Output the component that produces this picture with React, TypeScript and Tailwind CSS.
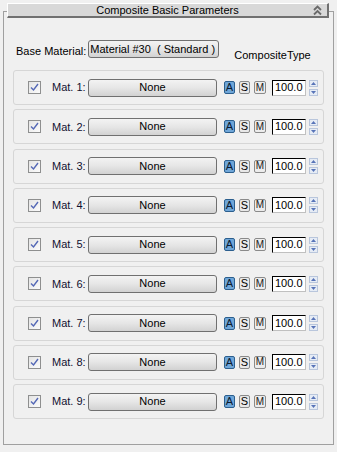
const mats = [1, 2, 3, 4, 5, 6, 7, 8, 9]

function CheckBox() {
  return (
    <div className="w-[13px] h-[13px] border border-[#8e8f8f] bg-gradient-to-br from-[#e4e4e4] to-[#fbfbfb] flex items-center justify-center">
      <svg width="9" height="9" viewBox="0 0 9 9">
        <path d="M1 4.5 L3.5 7 L8 1" fill="none" stroke="#5468b6" strokeWidth="1.4" />
      </svg>
    </div>
  )
}

function Spinner() {
  return (
    <div className="w-[9px] h-[16px] flex flex-col justify-between ml-[3px]">
      <div className="h-[7px] bg-[#e6ecf5] border border-[#b9c6dc] flex items-center justify-center">
        <svg width="5" height="3" viewBox="0 0 5 3">
          <path d="M0 3 L2.5 0 L5 3 Z" fill="#5874b8" />
        </svg>
      </div>
      <div className="h-[7px] bg-[#e6ecf5] border border-[#b9c6dc] flex items-center justify-center">
        <svg width="5" height="3" viewBox="0 0 5 3">
          <path d="M0 0 L2.5 3 L5 0 Z" fill="#5874b8" />
        </svg>
      </div>
    </div>
  )
}

function MatRow({ n }: { n: number }) {
  return (
    <div className="h-[35px] mx-[9px] border border-[#d6d6d6] rounded-[3px] flex items-center">
      <div className="ml-[14px]">
        <CheckBox />
      </div>
      <span className="ml-[11px] w-[36px] text-[#101030]">Mat. {n}:</span>
      <button className="w-[129px] h-[18px] border border-[#707070] rounded-[3px] bg-gradient-to-b from-[#f3f3f3] via-[#e6e6e6] to-[#d2d2d2] text-black leading-none">
        None
      </button>
      <div className="ml-[7px] w-[11px] h-[13px] border border-[#2c5f8e] rounded-[2px] bg-[#6fa6d8] text-[#0a1a30] flex items-center justify-center leading-none">
        A
      </div>
      <div className="ml-[4px] w-[11px] h-[13px] border border-[#8a8a8a] rounded-[2px] bg-[#e8e8e8] text-black flex items-center justify-center leading-none">
        S
      </div>
      <div className="ml-[4px] w-[12px] h-[13px] border border-[#8a8a8a] rounded-[2px] bg-[#ececec] text-[#202020] flex items-center justify-center leading-none text-[10px]">
        M
      </div>
      <div className="ml-[6px] w-[34px] h-[16px] bg-white border-t border-l border-black border-r border-b border-r-[#c0c0c0] border-b-[#c0c0c0] text-black flex items-center pl-[2px] leading-none">
        100.0
      </div>
      <Spinner />
    </div>
  )
}

export default function App() {
  return (
    <div className="w-[337px] h-[452px] bg-[#f0f0f0] pt-[11px] text-[11px] text-black" style={{ fontFamily: '"Liberation Sans", Arial, sans-serif' }}>
      <div className="mx-[3px] h-[434px] border border-[#a0a0a0]">
        <div className="ml-[3px] -mt-[9px] w-[322px] h-[15px] bg-[#d8d8d8] border-t border-l border-white border-b-2 border-r-2 border-b-[#707070] border-r-[#707070] flex items-center relative">
          <span className="flex-1 text-center leading-none">Composite Basic Parameters</span>
          <svg className="absolute right-[5px] top-[1px]" width="9" height="11" viewBox="0 0 9 11">
            <path d="M1 5 L4.5 1.5 L8 5" fill="none" stroke="#6a6a6a" strokeWidth="1.8" />
            <path d="M1 9.5 L4.5 6 L8 9.5" fill="none" stroke="#6a6a6a" strokeWidth="1.8" />
          </svg>
        </div>

        <div className="flex items-start mt-[22px] h-[25px]">
          <span className="ml-[12px] mt-[3px]">Base Material:</span>
          <button className="ml-[2px] w-[131px] h-[18px] border border-[#707070] rounded-[3px] bg-gradient-to-b from-[#f3f3f3] via-[#e6e6e6] to-[#d2d2d2] text-left pl-[1px] leading-none whitespace-pre">
            Material #30  ( Standard )
          </button>
          <span className="ml-[15px] mt-[7px]">CompositeType</span>
        </div>

        <div className="flex flex-col gap-[4.25px] mt-[5px]">
          {mats.map((n) => (
            <MatRow key={n} n={n} />
          ))}
        </div>
      </div>
    </div>
  )
}
